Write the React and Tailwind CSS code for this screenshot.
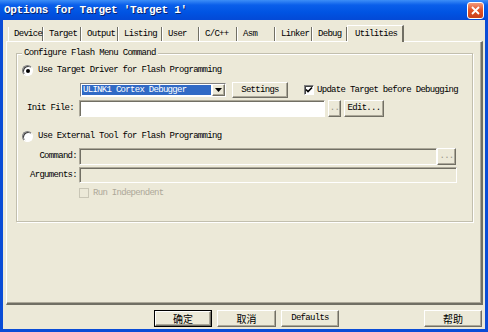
import React from "react";

const mono = "font-['Liberation_Mono','Noto_Sans_CJK_SC',monospace] text-[9px] tracking-[-0.7px] leading-[11px] text-black";
const raised =
  "border border-t-white border-l-white border-r-[#716f64] border-b-[#716f64] shadow-[inset_-1px_-1px_0_#aca899]";
const sunken =
  "border border-t-[#aca899] border-l-[#aca899] border-r-white border-b-white shadow-[inset_1px_1px_0_#716f64]";

const tabs = [
  ["Device", 35],
  ["Target", 38],
  ["Output", 37],
  ["Listing", 44],
  ["User", 37],
  ["C/C++", 38],
  ["Asm", 38],
  ["Linker", 37],
  ["Debug", 35],
];

const Radio = ({ on }) => (
  <span
    className={`flex items-center justify-center w-[11px] h-[11px] rounded-full bg-white border border-t-[#808080] border-l-[#808080] border-r-white border-b-white shadow-[inset_1px_1px_0_#404040] ${
      on ? "" : "bg-[#f4f3ee]"
    }`}
  >
    {on && <span className="w-[4px] h-[4px] rounded-full bg-black" />}
  </span>
);

const Check = ({ on, disabled }) => (
  <span
    className={`flex items-center justify-center w-[10px] h-[10px] border ${
      disabled
        ? "bg-[#ece9d8] border-[#c9c6b6]"
        : "bg-white border-t-[#808080] border-l-[#808080] border-r-white border-b-white shadow-[inset_1px_1px_0_#404040]"
    }`}
  >
    {on && (
      <svg width="8" height="8" viewBox="0 0 8 8">
        <path d="M1 3.5 L3 5.5 L7 1.5" stroke="black" strokeWidth="1.6" fill="none" />
      </svg>
    )}
  </span>
);

const Button = ({ children, className = "" }) => (
  <div className={`flex items-center justify-center bg-[#ece9d8] ${raised} ${className}`}>
    {children}
  </div>
);

export default function App() {
  return (
    <div className={`w-[488px] h-[332px] bg-[#0a4cd6] flex flex-col ${mono}`}>
      {/* title bar */}
      <div className="h-[20px] flex items-center bg-[linear-gradient(to_bottom,#3d8ef7_0%,#0a5fea_25%,#0054e3_60%,#0349d6_100%)]">
        <span className="pl-[4px] text-white font-bold text-[11px] tracking-[-0.3px] [text-shadow:1px_1px_0_#0a246a]">
          Options for Target 'Target 1'
        </span>
        <div className="ml-auto mr-[4px] w-[17px] h-[17px] rounded-[3px] border border-white bg-[linear-gradient(to_bottom,#f39a7c,#e2552a_45%,#c9401a)] flex items-center justify-center">
          <svg width="9" height="9" viewBox="0 0 9 9">
            <path d="M1 1 L8 8 M8 1 L1 8" stroke="white" strokeWidth="1.8" />
          </svg>
        </div>
      </div>

      {/* body */}
      <div className="mx-[3px] w-[482px] h-[309px] bg-[#ece9d8] flex flex-col">
        {/* tabs */}
        <div className="h-[21px] flex items-end pl-[5px]">
          {tabs.map(([t, w]) => (
            <div
              key={t}
              style={{ width: w }}
              className="h-[14px] pl-[5px] flex items-center border-l border-l-white border-r border-r-[#716f64]"
            >
              {t}
            </div>
          ))}
          <div className="relative z-10 -mb-px w-[57px] h-[17px] pl-[7px] flex items-center bg-[#ece9d8] border-t border-l border-t-white border-l-white border-r-2 border-r-[#716f64]">
            Utilities
          </div>
        </div>

        {/* panel */}
        <div className="ml-[3px] w-[477px] h-[264px] border-t border-l border-t-white border-l-white border-r-2 border-b-2 border-r-[#716f64] border-b-[#716f64] shadow-[inset_-1px_-1px_0_#aca899]">
          <div className="relative ml-[9px] mt-[11px] w-[457px] h-[169px] border border-[#c2bfae] shadow-[inset_1px_1px_0_#fff,1px_1px_0_#fff] flex flex-col">
            <span className="absolute left-[5px] top-[-6px] px-[2px] bg-[#ece9d8]">
              Configure Flash Menu Command
            </span>

            {/* radio 1 */}
            <div className="mt-[11px] ml-[5px] h-[11px] flex items-center gap-[5px]">
              <Radio on />
              <span>Use Target Driver for Flash Programming</span>
            </div>

            {/* driver row */}
            <div className="mt-[6px] ml-[63px] h-[16px] flex items-center">
              <div className="w-[146px] h-[14px] bg-white flex items-center border border-t-[#808080] border-l-[#808080] border-r-white border-b-white">
                <div className="ml-[1px] w-[129px] h-[10px] bg-[#316ac5] text-white pl-[1px] flex items-center">
                  ULINK1 Cortex Debugger
                </div>
                <Button className="ml-auto w-[13px] h-[12px]">
                  <svg width="7" height="4" viewBox="0 0 7 4">
                    <path d="M0 0 H7 L3.5 4 Z" fill="black" />
                  </svg>
                </Button>
              </div>
              <Button className="ml-[6px] w-[56px] h-[16px]">Settings</Button>
              <span className="ml-[16px]">
                <Check on />
              </span>
              <span className="ml-[3px]">Update Target before Debugging</span>
            </div>

            {/* init file */}
            <div className="mt-[2px] ml-[10px] h-[17px] flex items-center">
              <span className="w-[52px]">Init File:</span>
              <div className={`w-[246px] h-[17px] bg-white ${sunken}`} />
              <Button className="ml-[3px] w-[13px] h-[17px] text-[#9a978a]">..</Button>
              <Button className="ml-[3px] w-[40px] h-[17px]">Edit...</Button>
            </div>

            {/* radio 2 */}
            <div className="mt-[14px] ml-[5px] h-[11px] flex items-center gap-[5px]">
              <Radio />
              <span>Use External Tool for Flash Programming</span>
            </div>

            {/* command */}
            <div className="mt-[6px] h-[17px] flex items-center">
              <span className="w-[61px] text-right pr-[1px]">Command:</span>
              <div className={`ml-[1px] w-[358px] h-[17px] bg-[#ece9d8] ${sunken}`} />
              <Button className="w-[19px] h-[17px] text-[#9a978a]">...</Button>
            </div>

            {/* arguments */}
            <div className="mt-[2px] h-[16px] flex items-center">
              <span className="w-[61px] text-right pr-[1px]">Arguments:</span>
              <div className={`ml-[1px] w-[378px] h-[16px] bg-[#ece9d8] ${sunken}`} />
            </div>

            {/* run independent */}
            <div className="mt-[5px] ml-[62px] h-[10px] flex items-center">
              <Check disabled />
              <span className="ml-[4px] text-[#aca899]">Run Independent</span>
            </div>
          </div>
        </div>

        {/* buttons */}
        <div className="mt-[5px] h-[17px] flex items-center">
          <div className="ml-[151px] w-[58px] h-[17px] border border-black">
            <Button className="w-full h-full font-['Noto_Sans_CJK_SC',sans-serif] text-[10px] tracking-normal">
              确定
            </Button>
          </div>
          <Button className="ml-[5px] w-[59px] h-[17px] font-['Noto_Sans_CJK_SC',sans-serif] text-[10px] tracking-normal">
            取消
          </Button>
          <Button className="ml-[5px] w-[58px] h-[17px]">Defaults</Button>
          <Button className="ml-auto mr-[3px] w-[58px] h-[17px] font-['Noto_Sans_CJK_SC',sans-serif] text-[10px] tracking-normal">
            帮助
          </Button>
        </div>
      </div>
    </div>
  );
}
